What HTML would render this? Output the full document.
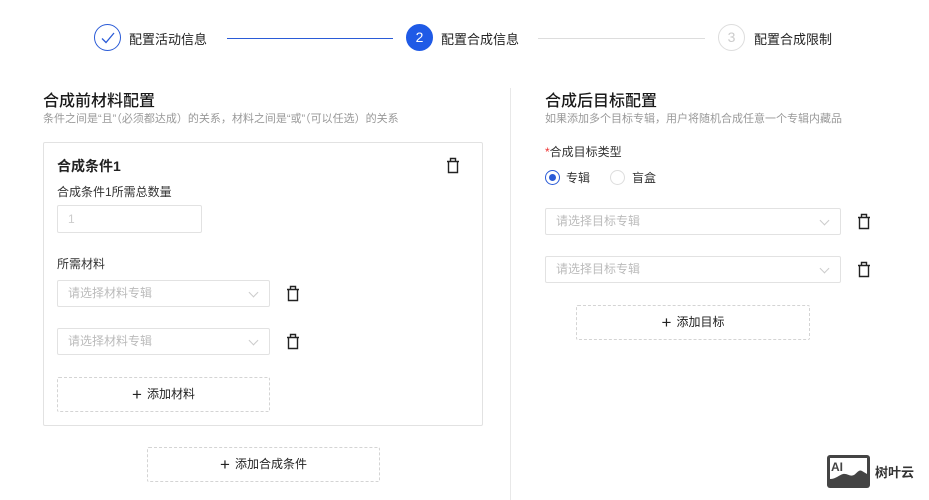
<!DOCTYPE html>
<html><head><meta charset="utf-8"><style>
*{margin:0;padding:0;box-sizing:border-box}
body{width:929px;height:500px;background:#fff;position:relative;overflow:hidden;font-family:"Liberation Sans","Noto Sans CJK SC",sans-serif;color:#222}
.a{position:absolute;white-space:nowrap}
.circ{position:absolute;width:27px;height:27px;border-radius:50%;text-align:center;line-height:25px;font-size:14px}
.t{font-size:13px;color:#222}
.h{font-size:16px;font-weight:500;color:#1a1a1a}
.sub{font-size:11px;color:#999}
.lbl{font-size:12px;color:#333}
.box{position:absolute;border:1px solid #e2e2e2;border-radius:2px;background:#fff}
.sel{position:absolute;border:1px solid #e2e2e2;border-radius:2px;height:27px;font-size:12px;color:#bbb;padding-left:10px;line-height:25px}
.sel:after{content:"";position:absolute;right:12px;top:8px;width:6px;height:6px;border-right:1px solid #ccc;border-bottom:1px solid #ccc;transform:rotate(45deg)}
.btn{position:absolute;border:1px dashed #d4d4d4;border-radius:2px;text-align:center;font-size:12px;color:#222}
.btn span{font-size:17px;font-weight:300;vertical-align:-2px;margin-right:5px}
svg.tr{position:absolute}
</style></head><body>
<div class="circ" style="left:94px;top:24px;border:1px solid #2a5bd7;color:#2a5bd7">
<svg width="14" height="12" viewBox="0 0 14 12" style="margin-top:7px"><path d="M1 6.5L5 10.5L13 1" fill="none" stroke="#2a5bd7" stroke-width="1.3"/></svg></div>
<div class="a t" style="left:129px;top:29px">配置活动信息</div>
<div class="a" style="left:227px;top:38px;width:166px;height:1px;background:#2a5bd7"></div>
<div class="circ" style="left:406px;top:24px;background:#1f5ae6;color:#fff;border:1px solid #1f5ae6">2</div>
<div class="a t" style="left:441px;top:29px">配置合成信息</div>
<div class="a" style="left:538px;top:38px;width:167px;height:1px;background:#ddd"></div>
<div class="circ" style="left:718px;top:24px;border:1px solid #ddd;color:#ccc">3</div>
<div class="a t" style="left:754px;top:29px">配置合成限制</div>

<div class="a h" style="left:43px;top:87px">合成前材料配置</div>
<div class="a sub" style="left:43px;top:110px">条件之间是“且”（必须都达成）的关系，材料之间是“或”（可以任选）的关系</div>
<div class="box" style="left:43px;top:142px;width:440px;height:284px"></div>
<div class="a" style="left:57px;top:156px;font-size:14px;font-weight:bold">合成条件1</div>
<svg class="tr" style="left:445px;top:157px" width="16" height="17" viewBox="0 0 16 17"><path d="M2 4.5H14M5.5 4.5V1.5H10.5V4.5M3.5 4.5V15.5H12.5V4.5" fill="none" stroke="#222" stroke-width="1.4"/></svg>
<div class="a lbl" style="left:57px;top:183px">合成条件1所需总数量</div>
<div class="box" style="left:57px;top:205px;width:145px;height:28px;font-size:12px;color:#ccc;padding-left:10px;line-height:26px">1</div>
<div class="a lbl" style="left:57px;top:255px">所需材料</div>
<div class="sel" style="left:57px;top:280px;width:213px">请选择材料专辑</div>
<svg class="tr" style="left:285px;top:285px" width="16" height="17" viewBox="0 0 16 17"><path d="M2 4.5H14M5.5 4.5V1.5H10.5V4.5M3.5 4.5V15.5H12.5V4.5" fill="none" stroke="#222" stroke-width="1.4"/></svg>
<div class="sel" style="left:57px;top:328px;width:213px">请选择材料专辑</div>
<svg class="tr" style="left:285px;top:333px" width="16" height="17" viewBox="0 0 16 17"><path d="M2 4.5H14M5.5 4.5V1.5H10.5V4.5M3.5 4.5V15.5H12.5V4.5" fill="none" stroke="#222" stroke-width="1.4"/></svg>
<div class="btn" style="left:57px;top:377px;width:213px;height:35px;line-height:33px"><span>+</span>添加材料</div>
<div class="btn" style="left:147px;top:447px;width:233px;height:35px;line-height:33px"><span>+</span>添加合成条件</div>

<div class="a" style="left:510px;top:88px;width:1px;height:412px;background:#e8e8e8"></div>

<div class="a h" style="left:545px;top:87px">合成后目标配置</div>
<div class="a sub" style="left:545px;top:110px">如果添加多个目标专辑，用户将随机合成任意一个专辑内藏品</div>
<div class="a lbl" style="left:545px;top:143px"><span style="color:#e33">*</span>合成目标类型</div>
<div class="a" style="left:545px;top:170px;width:15px;height:15px;border-radius:50%;border:1px solid #2a5bd7"><div style="position:absolute;left:3px;top:3px;width:7px;height:7px;border-radius:50%;background:#2a5bd7"></div></div>
<div class="a lbl" style="left:566px;top:169px">专辑</div>
<div class="a" style="left:610px;top:170px;width:15px;height:15px;border-radius:50%;border:1px solid #ddd"></div>
<div class="a lbl" style="left:632px;top:169px">盲盒</div>
<div class="sel" style="left:545px;top:208px;width:296px">请选择目标专辑</div>
<svg class="tr" style="left:856px;top:213px" width="16" height="17" viewBox="0 0 16 17"><path d="M2 4.5H14M5.5 4.5V1.5H10.5V4.5M3.5 4.5V15.5H12.5V4.5" fill="none" stroke="#222" stroke-width="1.4"/></svg>
<div class="sel" style="left:545px;top:256px;width:296px">请选择目标专辑</div>
<svg class="tr" style="left:856px;top:261px" width="16" height="17" viewBox="0 0 16 17"><path d="M2 4.5H14M5.5 4.5V1.5H10.5V4.5M3.5 4.5V15.5H12.5V4.5" fill="none" stroke="#222" stroke-width="1.4"/></svg>
<div class="btn" style="left:576px;top:305px;width:234px;height:35px;line-height:33px"><span>+</span>添加目标</div>

<svg class="tr" style="left:826px;top:454px" width="45" height="35" viewBox="0 0 45 35"><rect x="1" y="1" width="43" height="33" rx="3" fill="#444"/><rect x="4" y="4" width="37" height="27" fill="#fff"/><path d="M4 31V25C10 25 13 21 17 20C21 19 24 23 28 21C31 19 33 15 36 17L41 20V31Z" fill="#444"/><text x="5" y="17" font-family="Liberation Sans" font-weight="bold" font-size="12" fill="#444">AI</text></svg>
<div class="a" style="left:875px;top:462px;font-size:13px;font-weight:bold;color:#333">树叶云</div>
</body></html>
